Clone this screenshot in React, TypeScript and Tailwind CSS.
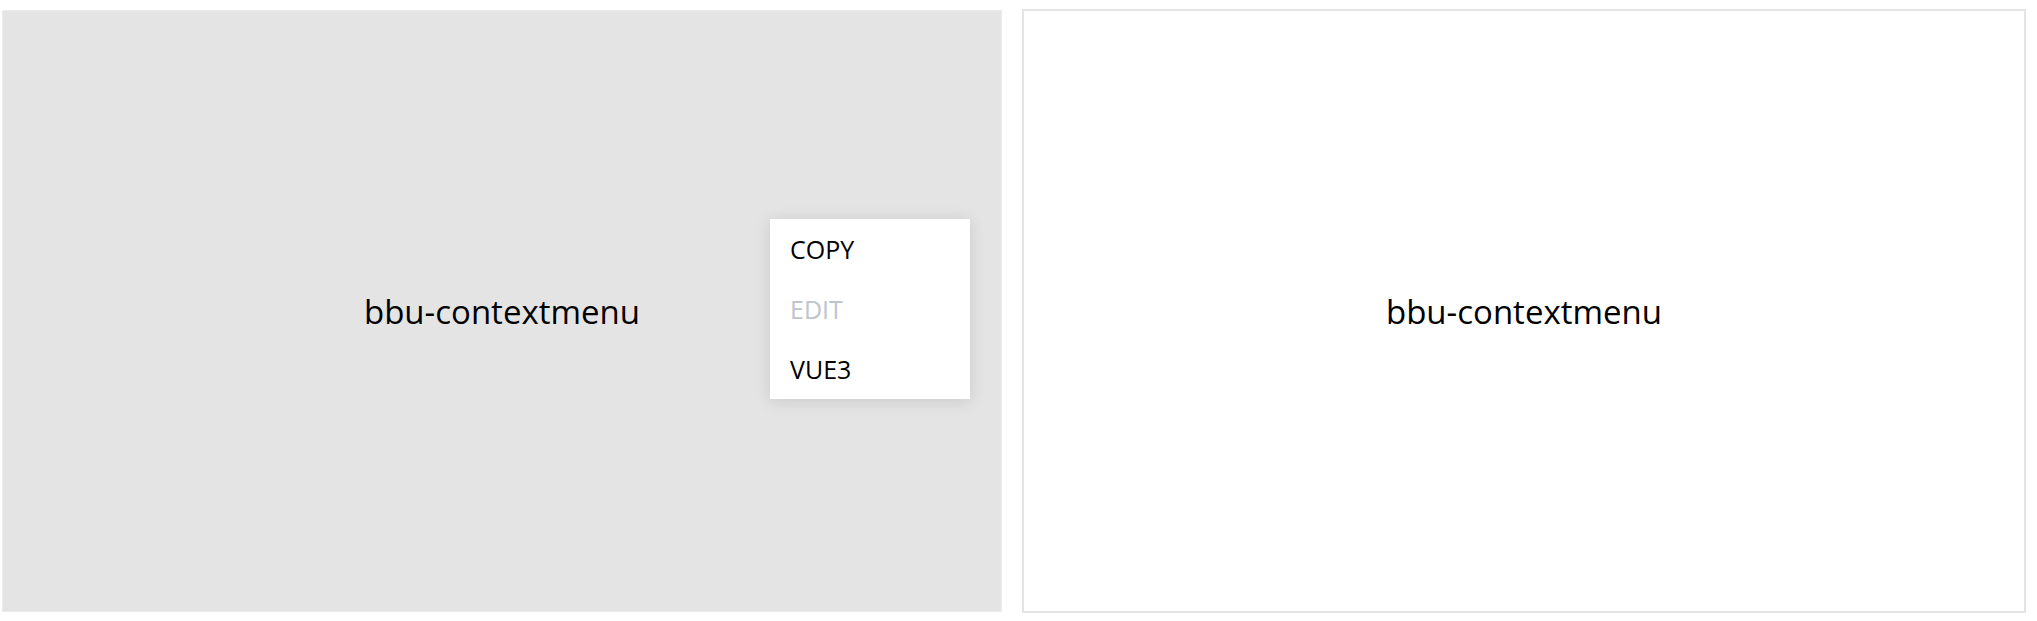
import React from 'react';

const items = [
  { label: 'COPY', disabled: false },
  { label: 'EDIT', disabled: true },
  { label: 'VUE3', disabled: false },
];

const App: React.FC = () => {
  return (
    <div className="flex gap-[20px] pl-[2px] pt-[10px] bg-white font-['Open_Sans',sans-serif] text-black">
      {/* Panel with menu open */}
      <div className="relative flex items-center justify-center w-[1000px] h-[602px] bg-[#e4e4e4] border border-[#ebebeb]">
        <span className="text-[33px] leading-none">bbu-contextmenu</span>
        <ul className="absolute left-[767px] top-[208px] w-[200px] bg-white shadow-[0_2px_16px_rgba(0,0,0,0.12)]">
          {items.map((item) => (
            <li
              key={item.label}
              className={`flex items-center h-[60px] pl-[20px] pt-[2px] text-[25px] ${item.disabled ? 'text-[#c0c4cc]' : 'text-black'}`}
            >
              {item.label}
            </li>
          ))}
        </ul>
      </div>

      {/* Plain panel */}
      <div className="flex items-center justify-center w-[1004px] h-[604px] -mt-[1px] border-2 border-[#e4e4e4] bg-white">
        <span className="text-[33px] leading-none">bbu-contextmenu</span>
      </div>
    </div>
  );
};

export default App;
